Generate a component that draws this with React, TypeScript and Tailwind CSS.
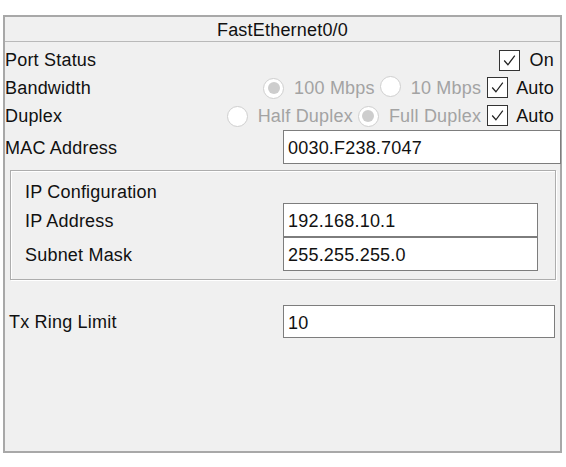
import React from "react";

const Check = () => (
  <span className="inline-flex w-[21px] h-[21px] border border-[#333] bg-white items-center justify-center shrink-0">
    <svg width="17" height="17" viewBox="0 0 16 16">
      <polyline points="3,8 6.5,12 13,3.5" fill="none" stroke="#222" strokeWidth="1.15" />
    </svg>
  </span>
);

const Radio = ({ on }: { on?: boolean }) => (
  <span className="inline-flex w-[21px] h-[21px] rounded-full border border-[#cfcfcf] bg-white items-center justify-center shrink-0">
    {on && <span className="w-[12px] h-[12px] rounded-full bg-[#cdcdcd]" />}
  </span>
);

export default function App() {
  return (
    <div
      className="w-[566px] h-[467px] bg-white pt-[15px] pl-[3px] text-[18px] tracking-[0.2px] text-[#111] leading-none"
      style={{ fontFamily: '"Liberation Sans", Arial, sans-serif' }}
    >
      <div className="w-[559px] h-[438px] border-2 border-[#a8a8a8] bg-[#f0f0f0] flex flex-col">
        <div className="h-[25px] shrink-0 border-b border-[#b9b9b9] flex items-center justify-center pt-[2px]">
          FastEthernet0/0
        </div>
        <div className="mt-[3px] h-[28px] flex items-center pt-[2px]">
          <span className="flex-1">Port Status</span>
          <Check />
          <span className="ml-[10px] mr-[6px]">On</span>
        </div>
        <div className="h-[28px] flex items-center pt-[2px]">
          <span className="flex-1">Bandwidth</span>
          <Radio on />
          <span className="ml-[10px] text-[#a3a3a3]">100 Mbps</span>
          <span className="ml-[5px]"><Radio /></span>
          <span className="ml-[10px] text-[#a3a3a3]">10 Mbps</span>
          <span className="ml-[6px]"><Check /></span>
          <span className="ml-[8px] mr-[6px]">Auto</span>
        </div>
        <div className="h-[28px] flex items-center pt-[2px]">
          <span className="flex-1">Duplex</span>
          <Radio />
          <span className="ml-[10px] text-[#a3a3a3]">Half Duplex</span>
          <span className="ml-[5px]"><Radio on /></span>
          <span className="ml-[10px] text-[#a3a3a3]">Full Duplex</span>
          <span className="ml-[6px]"><Check /></span>
          <span className="ml-[8px] mr-[6px]">Auto</span>
        </div>
        <div className="mt-[1px] h-[34px] flex items-center">
          <span className="w-[278px] shrink-0 pt-[2px]">MAC Address</span>
          <div className="w-[278px] h-[34px] shrink-0 border border-[#7d7d7d] bg-white flex items-center pl-[4px] pt-[2px]">
            0030.F238.7047
          </div>
        </div>
        <div className="mt-[6px] ml-[5px] w-[546px] h-[110px] border border-[#adadad] shadow-[inset_1px_1px_0_#ffffff,1px_1px_0_#ffffff] flex flex-col">
          <div className="h-[32px] flex items-end pb-[2px] pl-[14px]">IP Configuration</div>
          <div className="h-[34px] flex items-center">
            <span className="w-[272px] pl-[14px] shrink-0 pt-[1px]">IP Address</span>
            <div className="w-[255px] h-[34px] border border-[#7d7d7d] bg-white flex items-center pl-[4px] pt-[2px]">
              192.168.10.1
            </div>
          </div>
          <div className="h-[34px] flex items-center">
            <span className="w-[272px] pl-[14px] shrink-0 pt-[1px]">Subnet Mask</span>
            <div className="w-[255px] h-[34px] border border-[#7d7d7d] bg-white flex items-center pl-[4px] pt-[2px]">
              255.255.255.0
            </div>
          </div>
        </div>
        <div className="mt-[25px] h-[33px] flex items-center">
          <span className="w-[278px] pl-[4px] shrink-0 pt-[1px]">Tx Ring Limit</span>
          <div className="w-[272px] h-[33px] border border-[#7d7d7d] bg-white flex items-center pl-[4px] pt-[2px]">
            10
          </div>
        </div>
      </div>
    </div>
  );
}
